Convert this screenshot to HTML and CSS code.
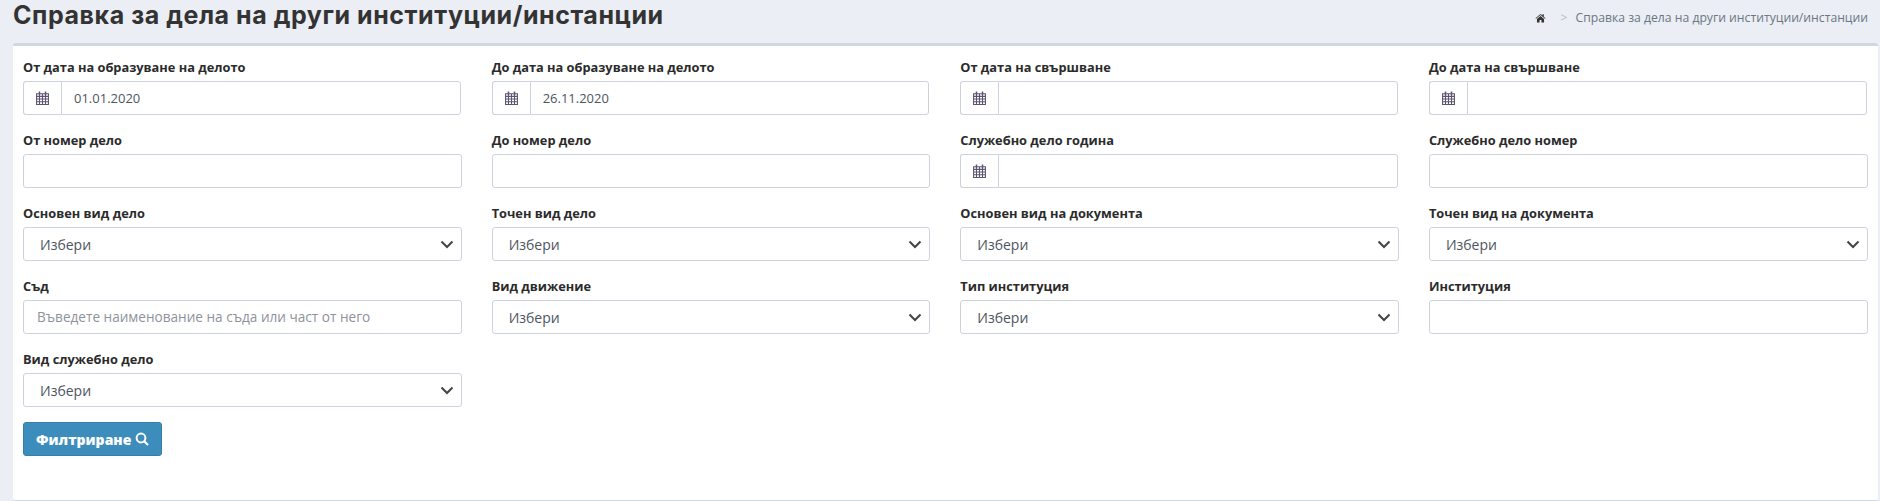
FILE: index.html
```html
<!DOCTYPE html>
<html lang="bg">
<head>
    <meta charset="UTF-8">
    <meta name="viewport" content="width=device-width, initial-scale=1.0">
    <title>Справка за дела на други институции/инстанции</title>
    <link rel="stylesheet" href="styles.css">
</head>
<body>
    <svg class="sprites" width="0" height="0">
        <symbol id="cal" viewBox="1 0.5 12 13">
            <path d="M1.5 3h11v10h-11zM1.5 5.5h11M1.5 8h11M1.5 10.5h11M4.2 3v10M7 3v10M9.8 3v10" fill="none" stroke="currentColor" stroke-width="1"/>
            <path d="M3.5 1h1.4v3H3.5zM9.1 1h1.4v3H9.1z" fill="currentColor"/>
        </symbol>
        <symbol id="chev" viewBox="0 0 14 9">
            <path d="M1.5 1.5 7 7l5.5-5.5" fill="none" stroke="currentColor" stroke-width="2"/>
        </symbol>
    </svg>

    <header class="page-head">
        <h1>Справка за дела на други институции/инстанции</h1>
        <div class="crumbs">
            <svg class="home" viewBox="0 0 14 12"><path d="M7 0.8 0.6 6.2l.7.8L7 2.3 12.7 7l.7-.8-2.2-1.9V1.2H9.5v1.6zM2.5 7.2V11.6h3.3V8.4h2.4v3.2h3.3V7.2L7 3.5z" fill="currentColor"/></svg>
            <span class="sep">&gt;</span>
            <span>Справка за дела на други институции/инстанции</span>
        </div>
    </header>

    <main class="card">
        <form class="filters">
            <div class="field">
                <label>От дата на образуване на делото</label>
                <div class="date"><span class="addon"><svg><use href="#cal"/></svg></span><input type="text" value="01.01.2020"></div>
            </div>
            <div class="field">
                <label>До дата на образуване на делото</label>
                <div class="date"><span class="addon"><svg><use href="#cal"/></svg></span><input type="text" value="26.11.2020"></div>
            </div>
            <div class="field">
                <label>От дата на свършване</label>
                <div class="date"><span class="addon"><svg><use href="#cal"/></svg></span><input type="text"></div>
            </div>
            <div class="field">
                <label>До дата на свършване</label>
                <div class="date"><span class="addon"><svg><use href="#cal"/></svg></span><input type="text"></div>
            </div>

            <div class="field">
                <label>От номер дело</label>
                <input type="text">
            </div>
            <div class="field">
                <label>До номер дело</label>
                <input type="text">
            </div>
            <div class="field">
                <label>Служебно дело година</label>
                <div class="date"><span class="addon"><svg><use href="#cal"/></svg></span><input type="text"></div>
            </div>
            <div class="field">
                <label>Служебно дело номер</label>
                <input type="text">
            </div>

            <div class="field">
                <label>Основен вид дело</label>
                <div class="pick"><select><option>Избери</option></select><svg><use href="#chev"/></svg></div>
            </div>
            <div class="field">
                <label>Точен вид дело</label>
                <div class="pick"><select><option>Избери</option></select><svg><use href="#chev"/></svg></div>
            </div>
            <div class="field">
                <label>Основен вид на документа</label>
                <div class="pick"><select><option>Избери</option></select><svg><use href="#chev"/></svg></div>
            </div>
            <div class="field">
                <label>Точен вид на документа</label>
                <div class="pick"><select><option>Избери</option></select><svg><use href="#chev"/></svg></div>
            </div>

            <div class="field">
                <label>Съд</label>
                <input type="text" placeholder="Въведете наименование на съда или част от него">
            </div>
            <div class="field">
                <label>Вид движение</label>
                <div class="pick"><select><option>Избери</option></select><svg><use href="#chev"/></svg></div>
            </div>
            <div class="field">
                <label>Тип институция</label>
                <div class="pick"><select><option>Избери</option></select><svg><use href="#chev"/></svg></div>
            </div>
            <div class="field">
                <label>Институция</label>
                <input type="text">
            </div>

            <div class="field">
                <label>Вид служебно дело</label>
                <div class="pick"><select><option>Избери</option></select><svg><use href="#chev"/></svg></div>
            </div>
        </form>

        <button type="button" class="btn">Филтриране
            <svg viewBox="0 0 14 14"><circle cx="6" cy="6" r="4.4" fill="none" stroke="currentColor" stroke-width="2"/><path d="M9.2 9.2 13 13" stroke="currentColor" stroke-width="2.2"/></svg>
        </button>
    </main>
</body>
</html>
```

FILE: styles.css
```css
body {
    font-family: "Open Sans", "Noto Sans", sans-serif;
    margin: 0;
    background-color: #ebeef4;
    color: #2b2b2b;
    font-size: 13px;
}

.sprites {
    display: block;
    height: 0;
}

.page-head {
    display: flex;
    justify-content: space-between;
    align-items: center;
    height: 43px;
    padding: 0 12px 13px 13px;
    box-sizing: border-box;
}

h1 {
    margin: 0;
    font-family: Inter, "Noto Sans", sans-serif;
    font-size: 25px;
    font-weight: 700;
    line-height: 30px;
    color: #333;
    letter-spacing: 0.55px;
}

.crumbs {
    display: flex;
    align-items: center;
    margin-top: 5px;
    color: #6b7683;
    font-size: 12.2px;
}

.home {
    width: 11px;
    height: 10px;
    color: #333;
    margin-right: 14px;
}

.sep {
    color: #b9bec6;
    margin-right: 8px;
}

.card {
    margin: 0 2px 0 13px;
    height: 458px;
    box-sizing: border-box;
    background-color: #fff;
    border-top: 3px solid #d2d6e0;
    border-bottom: 1px solid #d2d6e0;
    border-radius: 3px;
    padding: 11px 10.5px 0 10px;
}

.filters {
    display: grid;
    grid-template-columns: repeat(4, 1fr);
    column-gap: 30px;
    row-gap: 15px;
}

label {
    display: block;
    font-weight: 700;
    font-size: 12.8px;
    line-height: 20px;
    margin-bottom: 4px;
    color: #2b2b2b;
}

input, select {
    display: block;
    width: 100%;
    height: 34px;
    box-sizing: border-box;
    border: 1px solid #ced2de;
    border-radius: 3px;
    background-color: #fff;
    font-family: inherit;
    font-size: 13px;
    color: #4d5560;
    outline: none;
}

input {
    padding: 0 13px;
}

input::placeholder {
    color: #8d939b;
    font-size: 13.6px;
    opacity: 1;
}

.date {
    display: flex;
    margin-right: 1px;
}

.addon {
    flex: none;
    width: 38px;
    height: 34px;
    box-sizing: border-box;
    border: 1px solid #ced2de;
    border-right: 0;
    border-radius: 3px 0 0 3px;
    display: flex;
    align-items: center;
    justify-content: center;
    color: #5c5470;
}

.addon svg {
    width: 13px;
    height: 14px;
}

.date input {
    border-radius: 0 3px 3px 0;
    padding: 0 12px;
}

.pick {
    position: relative;
}

.pick select {
    appearance: none;
    padding: 0 16px;
    font-size: 14px;
}

.pick svg {
    position: absolute;
    right: 8px;
    top: 13px;
    width: 14px;
    height: 9px;
    color: #444;
}

.btn {
    display: flex;
    align-items: center;
    gap: 4px;
    margin-top: 15px;
    height: 34px;
    padding: 0 12px;
    background-color: #3c8dbc;
    color: #fff;
    border: 1px solid #367fa9;
    border-radius: 3px;
    font-family: inherit;
    font-size: 14px;
    font-weight: 800;
}

.btn svg {
    width: 14px;
    height: 14px;
}
```
